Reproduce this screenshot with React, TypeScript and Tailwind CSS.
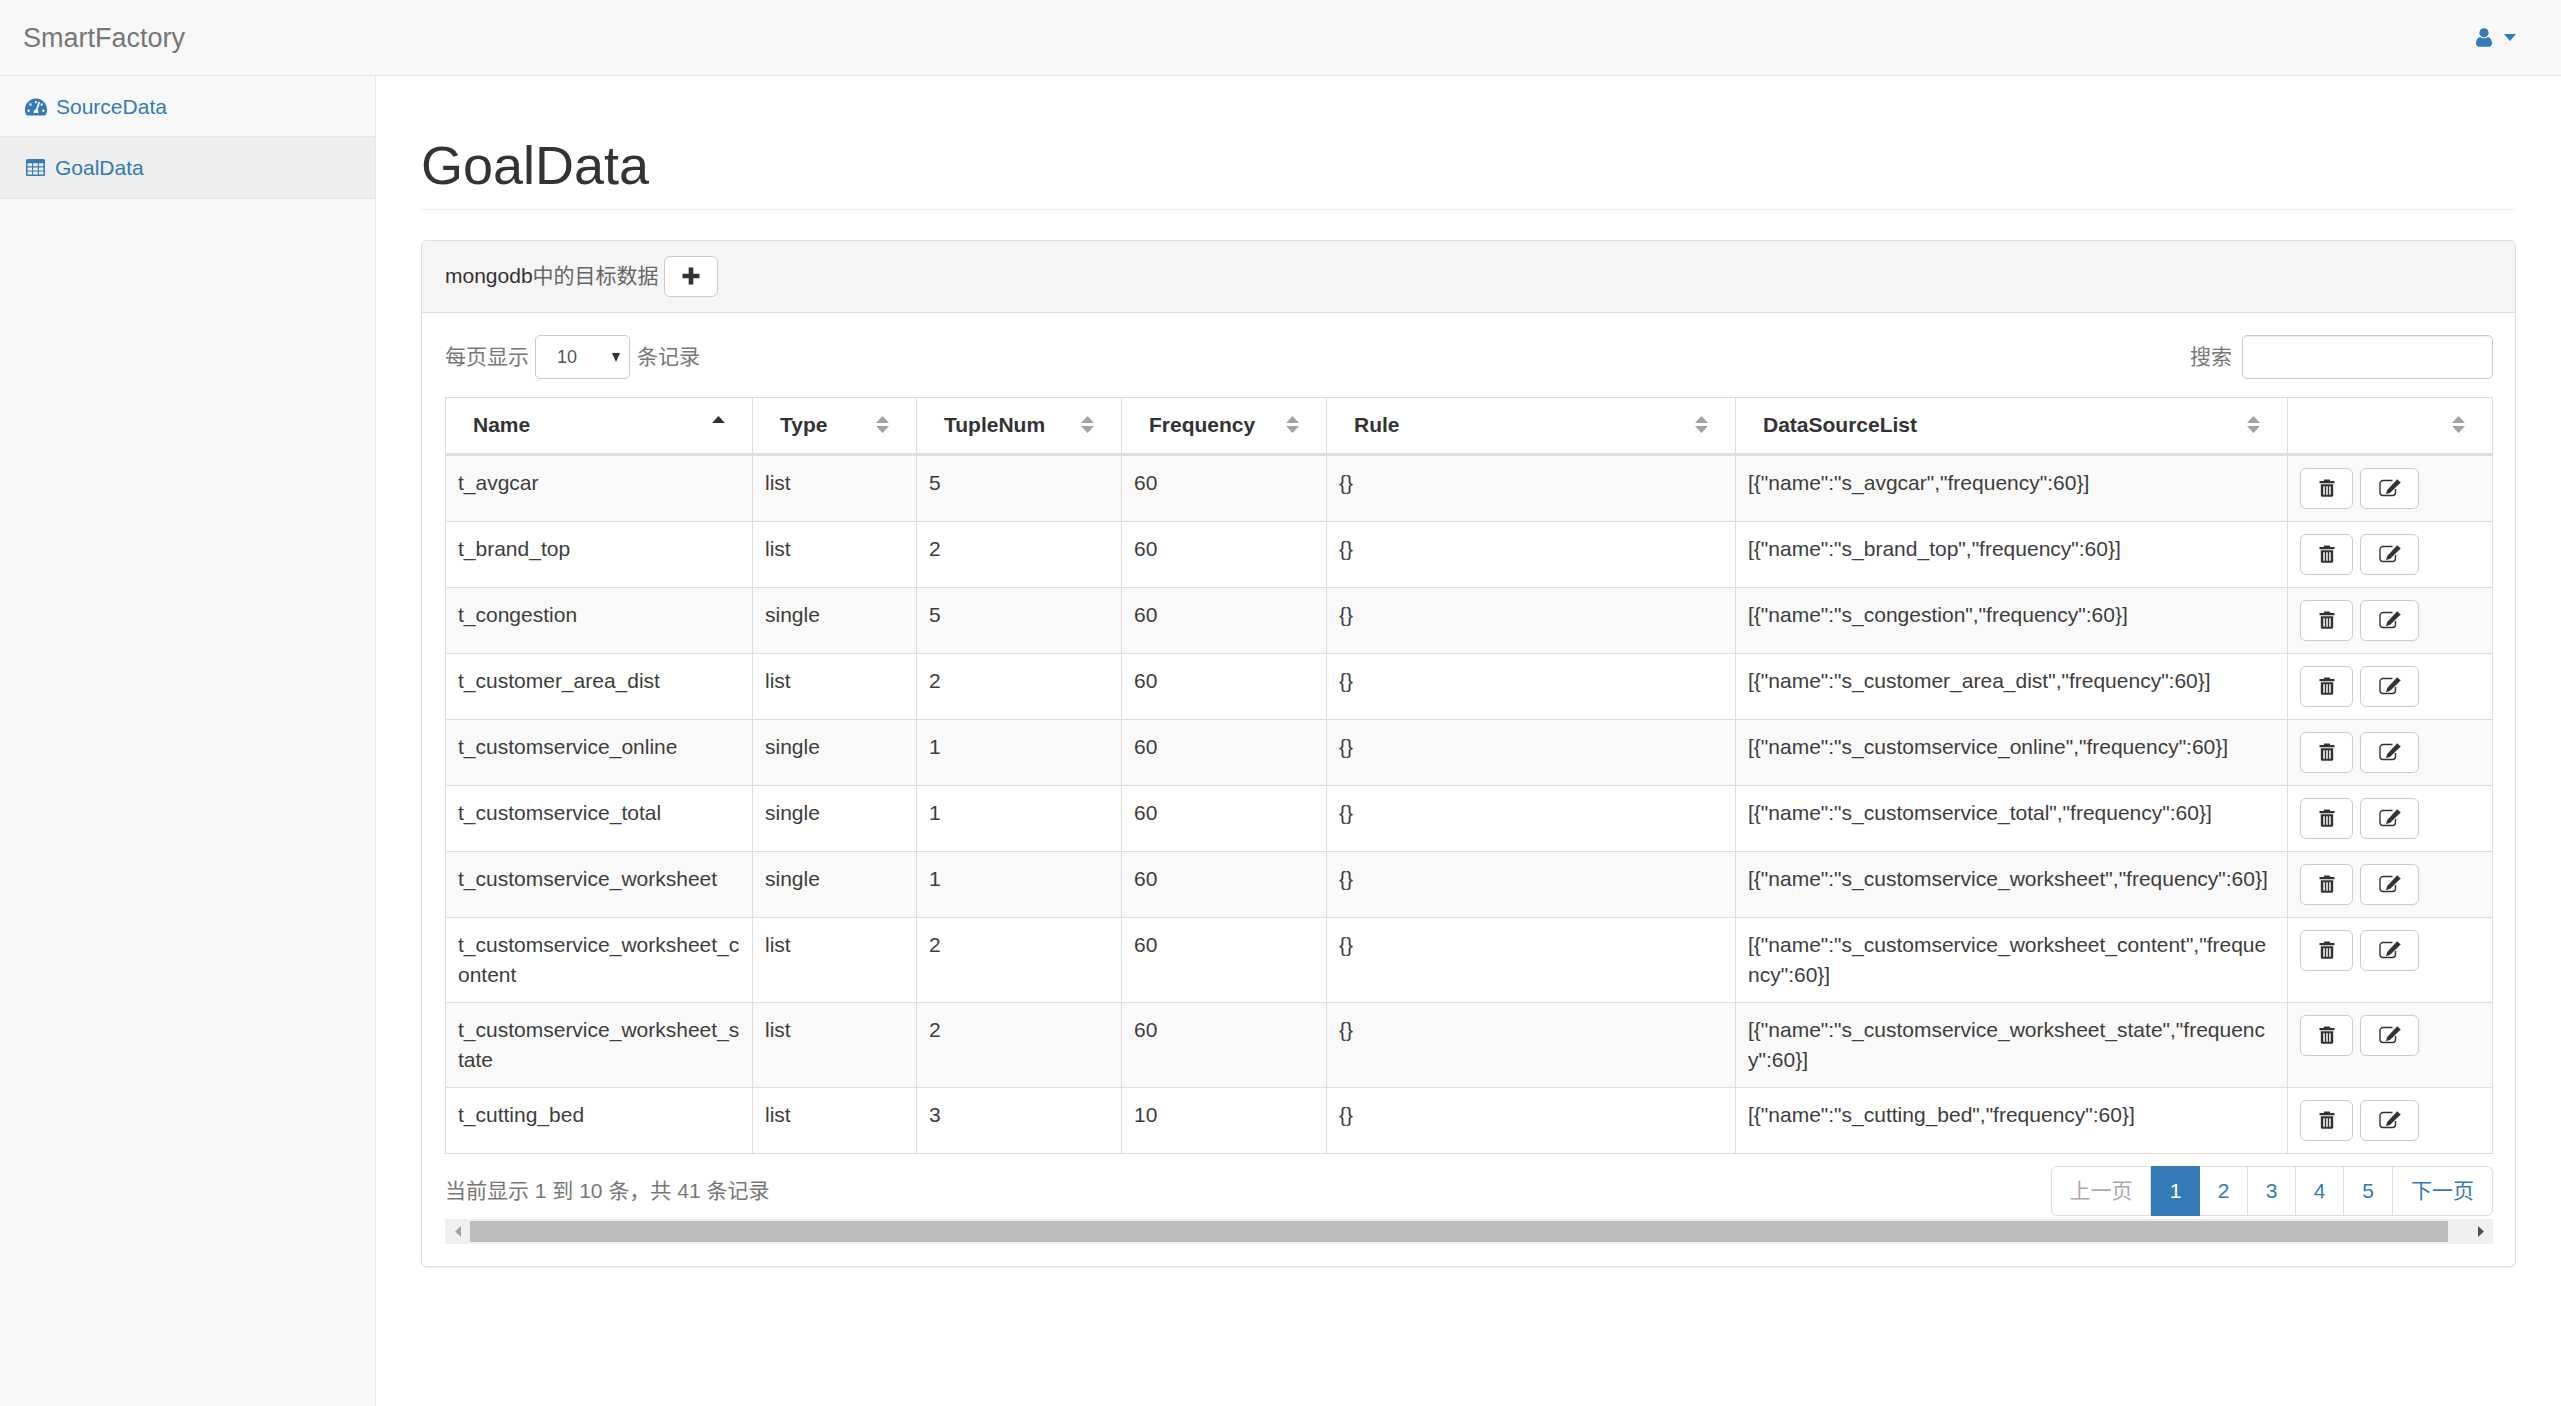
import React from "react";
import { FaTachometerAlt } from "react-icons/fa";

const rows: [string, string, string, string][] = [
  ["t_avgcar", "list", "5", "60"],
  ["t_brand_top", "list", "2", "60"],
  ["t_congestion", "single", "5", "60"],
  ["t_customer_area_dist", "list", "2", "60"],
  ["t_customservice_online", "single", "1", "60"],
  ["t_customservice_total", "single", "1", "60"],
  ["t_customservice_worksheet", "single", "1", "60"],
  ["t_customservice_worksheet_content", "list", "2", "60"],
  ["t_customservice_worksheet_state", "list", "2", "60"],
  ["t_cutting_bed", "list", "3", "10"],
];

const cols = [307, 164, 205, 205, 409, 552, 205];
const heads = ["Name", "Type", "TupleNum", "Frequency", "Rule", "DataSourceList", ""];

function SortIcon({ asc }: { asc?: boolean }) {
  return (
    <svg width="13" height="17" viewBox="0 0 13 17" className="shrink-0">
      <path d="M6.5 0L13 7H0z" fill={asc ? "#333333" : "#a3a3a3"} />
      {!asc && <path d="M0 10h13L6.5 17z" fill="#a3a3a3" />}
    </svg>
  );
}

function TrashIcon() {
  return (
    <svg width="18" height="18" viewBox="0 0 18 18" fill="#333333">
      <path d="M6.3 0.5h5.4l.6 1.5H16.5v2.2H1.5V2h4.2z" />
      <path
        fillRule="evenodd"
        d="M2.8 5.2h12.4v11a1.6 1.6 0 0 1-1.6 1.6H4.4a1.6 1.6 0 0 1-1.6-1.6zM5.3 7.2v8.6h1.5V7.2zM8.25 7.2v8.6h1.5V7.2zM11.2 7.2v8.6h1.5V7.2z"
      />
    </svg>
  );
}

function EditIcon() {
  return (
    <svg width="22" height="18" viewBox="0 0 22 18">
      <path
        d="M13.5 1.5H4a3 3 0 0 0-3 3v9a3 3 0 0 0 3 3h9.5a3 3 0 0 0 3-3v-3.5"
        fill="none"
        stroke="#333333"
        strokeWidth="1.4"
      />
      <path d="M18.2 0.3L21.7 3.4 11.2 13.8 7 15.2 8.2 11z" fill="#333333" />
    </svg>
  );
}

function PlusIcon() {
  return (
    <svg width="18" height="18" viewBox="0 0 18 18" fill="#333333">
      <path d="M6.7 0.5h4.6v6.2h6.2v4.6h-6.2v6.2H6.7v-6.2H0.5V6.7h6.2z" />
    </svg>
  );
}

function TableIcon() {
  let d = "M1.5 0h16A1.5 1.5 0 0 1 19 1.5v14a1.5 1.5 0 0 1-1.5 1.5h-16A1.5 1.5 0 0 1 0 15.5v-14A1.5 1.5 0 0 1 1.5 0z";
  [1.5, 7.2, 12.9].forEach((x) => {
    [4.2, 8.4, 12.6].forEach((y) => {
      d += `M${x} ${y}h4.6v3h-4.6z`;
    });
  });
  return (
    <svg width="19" height="17" viewBox="0 0 19 17" className="shrink-0">
      <path fillRule="evenodd" d={d} fill="#337ab7" />
    </svg>
  );
}

function UserIcon() {
  return (
    <svg width="16" height="19" viewBox="0 0 16 19" fill="#337ab7">
      <circle cx="8" cy="4.8" r="4.6" />
      <path d="M0 15.5c0-3.8 1.6-5.8 4-6.6 1.1.9 2.5 1.4 4 1.4s2.9-.5 4-1.4c2.4.8 4 2.8 4 6.6 0 2-1.4 3.2-3 3.2H3c-1.6 0-3-1.2-3-3.2z" />
    </svg>
  );
}

export default function App() {
  const pageLink = "h-[50px] flex items-center justify-center border-y border-r border-[#dddddd] bg-white text-[#337ab7]";
  return (
    <div className="min-h-screen flex flex-col bg-white text-[21px] leading-[30px] text-[#333333] font-['Liberation_Sans','Noto_Sans_CJK_SC',sans-serif]">
      <nav className="h-[76px] shrink-0 flex items-center justify-between pl-[23px] pr-[45px] bg-[#f8f8f8] border-b border-[#e7e7e7]">
        <span className="text-[27px] text-[#777777]">SmartFactory</span>
        <div className="flex items-center gap-[12px]">
          <UserIcon />
          <svg width="12" height="7" viewBox="0 0 12 7" fill="#337ab7">
            <path d="M0 0h12L6 7z" />
          </svg>
        </div>
      </nav>
      <div className="flex flex-1">
        <aside className="w-[376px] shrink-0 bg-[#f8f8f8] border-r border-[#e7e7e7]">
          <a className="h-[61px] pt-[1px] flex items-center gap-[9px] pl-[25px] border-b border-[#e7e7e7] text-[#337ab7]">
            <FaTachometerAlt size={22} color="#337ab7" className="shrink-0" />
            <span>SourceData</span>
          </a>
          <a className="h-[62px] flex items-center gap-[10px] pl-[26px] border-b border-[#e7e7e7] bg-[#eeeeee] text-[#337ab7]">
            <TableIcon />
            <span>GoalData</span>
          </a>
        </aside>
        <main className="flex-1 min-w-0 px-[45px]">
          <div className="mt-[60px] mb-[30px] pb-[13.5px] border-b border-[#eeeeee]">
            <h1 className="text-[54px] leading-[59.4px] font-medium">GoalData</h1>
          </div>
          <section className="border border-[#dddddd] rounded-[6px] bg-white shadow-[0_1px_1px_rgba(0,0,0,0.05)]">
            <header className="flex items-center gap-[5px] pl-[23px] py-[15px] bg-[#f5f5f5] border-b border-[#dddddd] rounded-t-[6px]">
              <span>
                mongodb<span className="text-[#666666]">中的目标数据</span>
              </span>
              <button className="w-[54px] h-[41px] flex items-center justify-center bg-white border border-[#cccccc] rounded-[6px]">
                <PlusIcon />
              </button>
            </header>
            <div className="pl-[23px] pr-[22px] pt-[22px] pb-[22px]">
              <div className="flex items-center justify-between h-[44px]">
                <div className="flex items-center gap-[6px] text-[#777777]">
                  <span>每页显示</span>
                  <div className="relative">
                    <select
                      defaultValue="10"
                      className="appearance-none w-[95px] h-[44px] pl-[21px] bg-white border border-[#cccccc] rounded-[5px] text-[18px] text-[#555555]"
                    >
                      <option>10</option>
                    </select>
                    <svg width="8" height="9" viewBox="0 0 8 9" className="absolute right-[10px] top-[18px] pointer-events-none" fill="#333333">
                      <path d="M0 0h8L4 9z" />
                    </svg>
                  </div>
                  <span className="ml-[1px]">条记录</span>
                </div>
                <div className="flex items-center gap-[10px] text-[#777777]">
                  <span>搜索</span>
                  <input className="w-[251px] h-[44px] bg-white border border-[#cccccc] rounded-[5px] shadow-[inset_0_1px_1px_rgba(0,0,0,0.075)]" />
                </div>
              </div>
              <table className="mt-[18px] w-full table-fixed border-separate border-spacing-0 border-t border-l border-[#dddddd]">
                <colgroup>
                  {cols.map((w, i) => (
                    <col key={i} style={{ width: w }} />
                  ))}
                </colgroup>
                <thead>
                  <tr>
                    {heads.map((h, i) => (
                      <th key={i} className="pl-[27px] pr-[27px] pt-[12px] pb-[13px] border-r border-b-[3px] border-[#dddddd] text-left font-bold">
                        <div className="flex items-center justify-between h-[30px]">
                          <span>{h}</span>
                          <SortIcon asc={i === 0} />
                        </div>
                      </th>
                    ))}
                  </tr>
                </thead>
                <tbody className="text-[#3d3d3d]">
                  {rows.map((r, i) => {
                    const bg = i % 2 === 0 ? "bg-[#f9f9f9]" : "bg-white";
                    const td = `p-[12px] align-top border-r border-b border-[#dddddd] break-all ${bg}`;
                    return (
                      <tr key={r[0]}>
                        <td className={td}>{r[0]}</td>
                        <td className={td}>{r[1]}</td>
                        <td className={td}>{r[2]}</td>
                        <td className={td}>{r[3]}</td>
                        <td className={td}>{"{}"}</td>
                        <td className={td}>{`[{"name":"${r[0].replace(/^t_/, "s_")}","frequency":60}]`}</td>
                        <td className={td}>
                          <div className="flex gap-[7px]">
                            <button className="w-[53px] h-[41px] flex items-center justify-center bg-white border border-[#cccccc] rounded-[6px]">
                              <TrashIcon />
                            </button>
                            <button className="w-[59px] h-[41px] flex items-center justify-center bg-white border border-[#cccccc] rounded-[6px]">
                              <EditIcon />
                            </button>
                          </div>
                        </td>
                      </tr>
                    );
                  })}
                </tbody>
              </table>
              <div className="mt-[12px] flex items-center justify-between">
                <span className="text-[#777777]">当前显示 1 到 10 条，共 41 条记录</span>
                <div className="flex">
                  <span className="w-[100px] h-[50px] flex items-center justify-center border border-[#dddddd] rounded-l-[6px] bg-white text-[#aaaaaa]">上一页</span>
                  <span className="w-[49px] h-[50px] flex items-center justify-center bg-[#337ab7] text-white">1</span>
                  <a className={`w-[48px] ${pageLink}`}>2</a>
                  <a className={`w-[48px] ${pageLink}`}>3</a>
                  <a className={`w-[48px] ${pageLink}`}>4</a>
                  <a className={`w-[49px] ${pageLink}`}>5</a>
                  <a className={`w-[100px] rounded-r-[6px] ${pageLink} text-[#5f9bd0]`}>下一页</a>
                </div>
              </div>
              <div className="mt-[3px] h-[25px] flex items-center bg-[#f0f0f0]">
                <div className="w-[25px] h-full flex items-center justify-center shrink-0">
                  <svg width="6" height="11" viewBox="0 0 6 11" fill="#a3a3a3">
                    <path d="M6 0v11L0 5.5z" />
                  </svg>
                </div>
                <div className="flex-1 h-[21px] bg-[#bdbdbd]" />
                <div className="w-[45px] h-full flex items-center justify-end pr-[9px] shrink-0">
                  <svg width="6" height="11" viewBox="0 0 6 11" fill="#505050">
                    <path d="M0 0l6 5.5L0 11z" />
                  </svg>
                </div>
              </div>
            </div>
          </section>
        </main>
      </div>
    </div>
  );
}
